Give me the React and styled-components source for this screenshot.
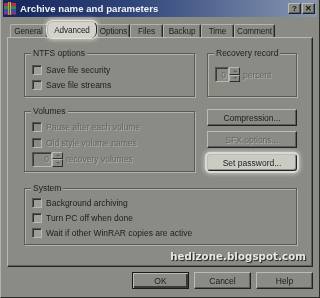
import styled, { createGlobalStyle } from "styled-components";

const GlobalStyle = createGlobalStyle`
  html, body {
    margin: 0;
    padding: 0;
    background: #8b8b86;
  }
  body {
    font-family: "Liberation Sans", Arial, sans-serif;
    font-size: 8.5px;
    color: #1c1c1c;
  }
`;

const Window = styled.div`
  width: 320px;
  height: 298px;
  box-sizing: border-box;
  background: #8b8b86;
  border-left: 1px solid #b3b3ad;
  border-right: 1px solid #2a2a28;
  border-bottom: 1px solid #2a2a28;
  padding: 0 2px 2px 2px;
  display: flex;
  flex-direction: column;
  filter: blur(0.3px);
`;

const TitleBar = styled.div`
  height: 17px;
  display: flex;
  align-items: center;
  padding: 0 2px 0 1px;
  background: linear-gradient(90deg, #15255a 0%, #2f4479 40%, #8797b2 100%);
`;

const TitleText = styled.span`
  flex: 1;
  margin-left: 4px;
  color: #f4f4f4;
  font-weight: bold;
  font-size: 9.6px;
  letter-spacing: 0.05px;
`;

const TitleButton = styled.div`
  width: 13px;
  height: 11px;
  box-sizing: border-box;
  margin-left: 1px;
  background: #8b8b86;
  border: 1px solid;
  border-color: #bcbcb5 #222 #222 #bcbcb5;
  box-shadow: inset -1px -1px 0 #5c5c58;
  display: flex;
  align-items: center;
  justify-content: center;
  font-weight: bold;
  font-size: 8px;
  color: #111;
  line-height: 1;
`;

const Content = styled.div`
  padding: 4px 4px 0 4px;
  display: flex;
  flex-direction: column;
`;

const TabStrip = styled.div`
  height: 16px;
  display: flex;
  align-items: flex-end;
  padding-left: 3px;
  position: relative;
  z-index: 1;
`;

const Tab = styled.div`
  width: ${(p) => p.w}px;
  height: ${(p) => (p.active ? 17 : 13)}px;
  box-sizing: border-box;
  margin-bottom: ${(p) => (p.active ? -1 : 0)}px;
  display: flex;
  align-items: center;
  justify-content: center;
  border-top: 1px solid #b5b5ae;
  border-left: 1px solid #b5b5ae;
  border-right: 1px solid #262624;
  border-radius: ${(p) => (p.active ? "6px" : "2px 2px 0 0")};
  background: ${(p) => (p.active ? "#d3d3cc" : "#8b8b86")};
  box-shadow: ${(p) =>
    p.active
      ? "0 0 0 1px #e2e2dc, 0 0 4px 2px rgba(235,235,230,0.7)"
      : "inset -1px 0 0 #5e5e5a"};
  padding-top: 1px;
  font-size: 8.2px;
  letter-spacing: -0.1px;
  white-space: nowrap;
`;

const Panel = styled.div`
  position: relative;
  height: 230px;
  box-sizing: border-box;
  border: 1px solid;
  border-color: #b8b8b1 #262624 #262624 #b8b8b1;
  box-shadow: inset -1px -1px 0 #5e5e5a;
  padding: 15px 0 0 16px;
`;

const Grid = styled.div`
  display: grid;
  grid-template-columns: 171px 90px;
  grid-template-rows: 44px 61px;
  column-gap: 12px;
  row-gap: 14px;
  width: 273px;
`;

const Group = styled.div`
  position: relative;
  box-sizing: border-box;
  border: 1px solid #5a5a56;
  box-shadow: inset 1px 1px 0 #b2b2ab, 1px 1px 0 #b2b2ab;
  padding: ${(p) => p.pt || 8}px 0 0 7px;
  height: ${(p) => p.h}px;
  ${(p) => (p.full ? "margin-top: 16px; width: 273px;" : "")}
`;

const Legend = styled.span`
  position: absolute;
  top: -6px;
  left: 6px;
  padding: 0 2px;
  background: #8b8b86;
  line-height: 10px;
  color: #1c1c1c;
`;

const Row = styled.div`
  height: ${(p) => p.h || 15}px;
  display: flex;
  align-items: center;
  white-space: nowrap;
`;

const Check = styled.span`
  width: 10px;
  height: 10px;
  box-sizing: border-box;
  flex: none;
  border: 1px solid;
  border-color: #55554f #b8b8b1 #b8b8b1 #55554f;
  box-shadow: inset 1px 1px 0 #2e2e2c;
  background: ${(p) => (p.disabled ? "#8b8b86" : "#9e9e98")};
  margin-right: 4px;
`;

const Label = styled.span`
  color: ${(p) => (p.disabled ? "#676762" : "#1c1c1c")};
  text-shadow: ${(p) => (p.disabled ? "1px 1px 0 #b0b0a9" : "none")};
`;

const Spin = styled.div`
  display: flex;
  height: 15px;
  margin-right: 3px;
`;

const SpinField = styled.div`
  width: ${(p) => p.w}px;
  box-sizing: border-box;
  border: 1px solid;
  border-color: #55554f #b8b8b1 #b8b8b1 #55554f;
  box-shadow: inset 1px 1px 0 #3a3a37;
  display: flex;
  align-items: center;
  justify-content: flex-end;
  padding-right: 2px;
  color: #676762;
  text-shadow: 1px 1px 0 #b0b0a9;
`;

const SpinArrows = styled.div`
  width: 11px;
  display: flex;
  flex-direction: column;
`;

const SpinArrow = styled.div`
  flex: 1;
  box-sizing: border-box;
  border: 1px solid;
  border-color: #b8b8b1 #2e2e2c #2e2e2c #b8b8b1;
  display: flex;
  align-items: center;
  justify-content: center;
  &::after {
    content: "";
    border-left: 2px solid transparent;
    border-right: 2px solid transparent;
    ${(p) =>
      p.down
        ? "border-top: 2px solid #60605b;"
        : "border-bottom: 2px solid #60605b;"}
  }
`;

const ButtonColumn = styled.div`
  display: flex;
  flex-direction: column;
  margin-top: -2px;
`;

const Button = styled.div`
  width: ${(p) => p.w || 90}px;
  height: 17px;
  box-sizing: border-box;
  margin-top: ${(p) => p.mt || 0}px;
  display: flex;
  align-items: center;
  justify-content: center;
  border: 1px solid;
  border-color: ${(p) =>
    p.primary ? "#1a1a1a" : "#bcbcb5 #222 #222 #bcbcb5"};
  box-shadow: ${(p) =>
    p.highlight
      ? "inset -1px -1px 0 #8e8e89, 0 0 0 2px #dadad4, 0 0 4px 3px rgba(235,235,230,0.6)"
      : p.primary
      ? "inset 1px 1px 0 #bcbcb5, inset -2px -2px 0 #3a3a37"
      : "inset -1px -1px 0 #5c5c58"};
  border-radius: ${(p) => (p.highlight ? "3px" : "0")};
  background: ${(p) => (p.highlight ? "#cbcbc4" : "#8b8b86")};
  color: ${(p) => (p.disabled ? "#676762" : "#1c1c1c")};
  text-shadow: ${(p) => (p.disabled ? "1px 1px 0 #b0b0a9" : "none")};
`;

const Watermark = styled.div`
  position: absolute;
  right: 6px;
  bottom: 4px;
  font-family: "DejaVu Sans", Verdana, sans-serif;
  font-weight: bold;
  font-size: 10.2px;
  color: #e8e8e6;
  text-shadow: 1px 1px 1px #1e1e1e;
  letter-spacing: 0.1px;
`;

const Footer = styled.div`
  display: flex;
  justify-content: flex-end;
  gap: 5px;
  padding: 5px 0 0 0;
`;

const RarIcon = () => (
  <svg width="12" height="13" viewBox="0 0 12 13">
    <rect x="0" y="1" width="12" height="3" fill="#b03050" />
    <rect x="0" y="4" width="12" height="3" fill="#3f8a3a" />
    <rect x="0" y="7" width="12" height="3" fill="#3a4fa8" />
    <rect x="0" y="10" width="12" height="2.5" fill="#7a3c8a" />
    <rect x="4" y="0" width="3" height="13" fill="#c8b070" />
    <rect x="4.8" y="0" width="1" height="13" fill="#5a4a20" />
  </svg>
);

const CheckRow = ({ label, disabled, h }) => (
  <Row h={h}>
    <Check disabled={disabled} />
    <Label disabled={disabled}>{label}</Label>
  </Row>
);

const SpinBox = ({ w }) => (
  <Spin>
    <SpinField w={w}>0</SpinField>
    <SpinArrows>
      <SpinArrow />
      <SpinArrow down />
    </SpinArrows>
  </Spin>
);

const tabs = [
  ["General", 37],
  ["Advanced", 50],
  ["Options", 33],
  ["Files", 33],
  ["Backup", 38],
  ["Time", 33],
  ["Comment", 41],
];

export default function App() {
  return (
    <>
      <GlobalStyle />
      <Window>
        <TitleBar>
          <RarIcon />
          <TitleText>Archive name and parameters</TitleText>
          <TitleButton>?</TitleButton>
          <TitleButton>✕</TitleButton>
        </TitleBar>
        <Content>
          <TabStrip>
            {tabs.map(([name, w]) => (
              <Tab key={name} w={w} active={name === "Advanced"}>
                {name}
              </Tab>
            ))}
          </TabStrip>
          <Panel>
            <Grid>
              <Group h={44} pt={8}>
                <Legend>NTFS options</Legend>
                <CheckRow label="Save file security" />
                <CheckRow label="Save file streams" />
              </Group>
              <Group h={44} pt={13}>
                <Legend>Recovery record</Legend>
                <Row>
                  <SpinBox w={14} />
                  <Label disabled>percent</Label>
                </Row>
              </Group>
              <Group h={61} pt={7}>
                <Legend>Volumes</Legend>
                <CheckRow label="Pause after each volume" disabled h={16} />
                <CheckRow label="Old style volume names" disabled h={16} />
                <Row h={16}>
                  <SpinBox w={20} />
                  <Label disabled>recovery volumes</Label>
                </Row>
              </Group>
              <ButtonColumn>
                <Button>Compression...</Button>
                <Button mt={5} disabled>
                  SFX options...
                </Button>
                <Button mt={6} highlight>
                  Set password...
                </Button>
              </ButtonColumn>
            </Grid>
            <Group full h={57} pt={6}>
              <Legend>System</Legend>
              <CheckRow label="Background archiving" />
              <CheckRow label="Turn PC off when done" />
              <CheckRow label="Wait if other WinRAR copies are active" />
            </Group>
            <Watermark>hedizone.blogspot.com</Watermark>
          </Panel>
          <Footer>
            <Button w={57} primary>
              OK
            </Button>
            <Button w={57}>Cancel</Button>
            <Button w={57}>Help</Button>
          </Footer>
        </Content>
      </Window>
    </>
  );
}
